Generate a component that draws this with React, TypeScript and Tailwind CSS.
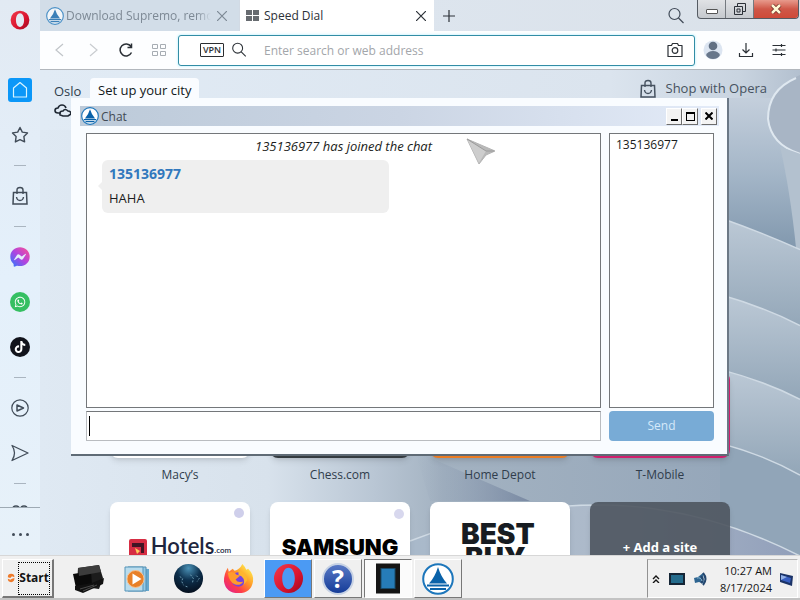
import React from "react";
import { FaFacebookMessenger, FaTiktok, FaWhatsapp } from "react-icons/fa";

type IconProps = { className?: string; children: React.ReactNode; box?: string };

function Line({ className = "size-5", children, box = "0 0 20 20" }: IconProps) {
  return (
    <svg aria-hidden="true" viewBox={box} className={className} fill="none" stroke="currentColor" strokeWidth="1.2">
      {children}
    </svg>
  );
}

function SupremoLogo({ className }: { className: string }) {
  return (
    <svg aria-hidden="true" viewBox="0 0 32 32" className={className}>
      <circle cx="16" cy="16" r="14.8" fill="#fff" stroke="#1c76bb" strokeWidth="2" />
      <path d="M16 4Q19 14 25 20.500H7Q13 14 16 4Z" fill="#0a62a9" />
      <path d="M5 22.500H27M8 26H24" stroke="#0a62a9" strokeWidth="2" />
    </svg>
  );
}

function OperaLogo({ className }: { className: string }) {
  return (
    <svg aria-hidden="true" viewBox="0 0 32 32" className={className}>
      <defs>
        <linearGradient id="operaRed" x1="0" y1="0" x2="1" y2="1">
          <stop offset="0" stopColor="#f23a4c" />
          <stop offset=".6" stopColor="#d8142e" />
          <stop offset="1" stopColor="#9c0720" />
        </linearGradient>
      </defs>
      <path
        fillRule="evenodd"
        fill="url(#operaRed)"
        d="M16 1a15 15 0 1 0 0 30a15 15 0 1 0 0-30ZM16 5c4 0 6.500 5 6.500 11S20 27 16 27S9.500 22 9.500 16S12 5 16 5Z"
      />
    </svg>
  );
}

function Magnifier({ className = "size-5" }: { className?: string }) {
  return (
    <Line className={className}>
      <circle cx="8.500" cy="8" r="5.500" />
      <path d="m12.500 12 5 5" />
    </Line>
  );
}

function ShoppingBag({ className = "size-5" }: { className?: string }) {
  return (
    <Line className={className}>
      <path d="M3.500 6.500h13l.5 11.500H3Z" strokeWidth="1.500" />
      <path d="M7 8V4q0-2.500 3-2.500T13 4v4M6.500 11q.5 3.500 3.500 3.500t3.500-3.500" strokeWidth="1.400" />
    </Line>
  );
}

function Wallpaper() {
  return (
    <svg
      aria-hidden="true"
      viewBox="40 70 760 486"
      preserveAspectRatio="none"
      className="absolute inset-0 size-full"
    >
      <defs>
        <linearGradient id="sky" x1="0" y1="0" x2="1" y2="0">
          <stop offset="0" stopColor="#dfe9f3" />
          <stop offset=".3" stopColor="#d8e2ec" />
          <stop offset=".44" stopColor="#b9c6d4" />
          <stop offset=".53" stopColor="#a3b2c1" />
          <stop offset="1" stopColor="#92a4b8" />
        </linearGradient>
        <linearGradient id="top" x1="0" y1="0" x2="1" y2="0">
          <stop offset="0" stopColor="#e1ebf5" />
          <stop offset=".75" stopColor="#dbe4ee" />
          <stop offset=".92" stopColor="#c9d4e0" />
          <stop offset="1" stopColor="#b3c0cf" />
        </linearGradient>
        <linearGradient id="fold" x1="0" y1="0" x2="0" y2="1">
          <stop offset="0" stopColor="#bcc9d6" />
          <stop offset="1" stopColor="#8fa3b5" />
        </linearGradient>
        <linearGradient id="side" x1="0" y1="0" x2="0" y2="1">
          <stop offset="0" stopColor="#c4cfdc" />
          <stop offset=".5" stopColor="#a3b5c7" />
          <stop offset="1" stopColor="#7f96ac" />
        </linearGradient>
        <linearGradient id="shade" x1="0" y1="0" x2="1" y2="0">
          <stop offset="0" stopColor="#8c9cb2" stopOpacity="0" />
          <stop offset="1" stopColor="#71819c" />
        </linearGradient>
        <linearGradient id="low" x1="0" y1="0" x2="1" y2="0">
          <stop offset="0" stopColor="#a9b9ca" />
          <stop offset=".5" stopColor="#adbaca" />
          <stop offset="1" stopColor="#919fba" />
        </linearGradient>
      </defs>
      <rect x="40" y="70" width="760" height="486" fill="url(#sky)" />
      <rect x="40" y="70" width="760" height="60" fill="url(#top)" />
      <rect x="720" y="98" width="80" height="156" fill="url(#side)" />
      <path d="M800 75Q768 88 768 119Q771 145 800 154Z" fill="#a8b5c5" />
      <path d="M796 78Q768 90 768 119Q771 145 800 154" fill="none" stroke="#dfe8f0" strokeWidth="2" />
      <path d="M780 147Q790 190 796 248L800 250V154Z" fill="#b3c1cf" />
      <path d="M720 218Q765 234 800 250V340H720Z" fill="url(#fold)" />
      <path d="M720 295Q765 308 800 326V410H720Z" fill="url(#fold)" />
      <path d="M720 370Q765 382 800 400V485H720Z" fill="url(#fold)" />
      <path d="M720 444Q765 456 800 476V556H720Z" fill="#91a5b8" />
      <path d="M415 452 530 502H430Z" fill="url(#shade)" opacity=".8" />
      <path d="M410 542Q500 506 600 506Q700 506 800 557H410Z" fill="url(#low)" />
      <path
        d="M410 542Q500 506 600 506Q700 506 800 557M720 444Q765 456 800 476M720 370Q765 382 800 400M720 295Q765 308 800 326M720 218Q765 234 800 250"
        fill="none"
        stroke="#cfdae4"
        strokeWidth="1.500"
      />
    </svg>
  );
}

function Divider() {
  return <span className="h-px w-3 bg-[#aab5c0]" />;
}

function Sidebar() {
  const item = "flex size-6 items-center justify-center";
  return (
    <nav
      aria-label="Sidebar"
      className="flex w-10 shrink-0 flex-col items-center overflow-hidden bg-linear-to-b from-[#e2eaf3] via-[#e4f0fb] to-[#e7f1f9] text-[#414c58]"
    >
      <button aria-label="Opera menu" className="mt-2 flex size-6 items-center justify-center">
        <OperaLogo className="size-5" />
      </button>
      <button aria-label="Home" className="mt-[46px] flex size-6 items-center justify-center rounded-[3px] bg-[#0b97f8] text-[#d7f4ff]">
        <Line>
          <path d="M3.500 8 10 2.500 16.500 8v9h-13Z" strokeLinejoin="round" />
        </Line>
      </button>
      <button aria-label="Bookmarks" className={`${item} mt-[21px]`}>
        <Line>
          <path
            d="m10 2.500 2.300 4.600 5.200.8-3.600 3.700.7 5.300-4.600-2.200-4.600 2.200.7-5.300L2.500 7.900l5.200-.8Z"
            strokeLinejoin="round"
            strokeWidth="1.400"
          />
        </Line>
      </button>
      <div className="mt-[18px] flex flex-col items-center gap-[18px]">
        <Divider />
        <button aria-label="Shopping" className={item}>
          <ShoppingBag />
        </button>
        <Divider />
      </div>
      <button aria-label="Messenger" className={`${item} mt-[18px]`}>
        <svg width="0" height="0" className="absolute">
          <linearGradient id="messenger" x1="1" y1="0" x2="0" y2="1">
            <stop offset="0" stopColor="#ff5290" />
            <stop offset=".5" stopColor="#b044e0" />
            <stop offset="1" stopColor="#267cff" />
          </linearGradient>
        </svg>
        <FaFacebookMessenger className="size-5" fill="url(#messenger)" />
      </button>
      <button aria-label="WhatsApp" className={`${item} mt-[21px]`}>
        <span className="flex size-5 items-center justify-center rounded-full bg-[#35bf62] text-white">
          <FaWhatsapp className="size-3" />
        </span>
      </button>
      <button aria-label="TikTok" className={`${item} mt-[21px]`}>
        <span className="flex size-5 items-center justify-center rounded-full bg-[#11131b] text-white">
          <FaTiktok className="size-3" />
        </span>
      </button>
      <div className="mt-[18px] flex flex-col items-center gap-[18px]">
        <Divider />
        <button aria-label="Player" className={item}>
          <Line>
            <circle cx="10" cy="10" r="8.200" />
            <path d="m7 7 6.500 3L7 13Z" strokeWidth="1.500" strokeLinejoin="round" />
          </Line>
        </button>
      </div>
      <button aria-label="My Flow" className={`${item} mt-[21px]`}>
        <Line>
          <path d="M2 2.500 18 10 2 17.500Q7 10 2 2.500Z" strokeLinejoin="round" strokeWidth="1.300" />
        </Line>
      </button>
      <div className="mt-[18px] flex h-[25px] w-full shrink-0 flex-col items-center justify-between border-b border-[#9eaab4]">
        <Divider />
        <Line className="h-0.5 w-4" box="0 0 16 2">
          <path d="M1 2q3-2 6 0M9 2q3-2 6 0" strokeWidth="1.500" />
        </Line>
      </div>
      <button aria-label="More" className="mt-[25px] flex gap-1">
        <span className="size-[3px] rounded-full bg-current" />
        <span className="size-[3px] rounded-full bg-current" />
        <span className="size-[3px] rounded-full bg-current" />
      </button>
    </nav>
  );
}

function Cross({ className = "size-[10px]" }: { className?: string }) {
  return (
    <Line className={className} box="0 0 10 10">
      <path d="m0 0 10 10M10 0 0 10" />
    </Line>
  );
}

function TabStrip() {
  const control = "flex h-full items-center justify-center";
  return (
    <div className="flex h-[31px] shrink-0 items-stretch bg-linear-to-r from-[#d3dee9] via-[#dde5ee] to-[#dae1e9] text-[12px] text-[#2c3138]">
      <div className="flex w-50 items-center border-r border-[#d2dae4] bg-[#d2dde8] pr-3 pl-1.5 text-[#7d8995]">
        <SupremoLogo className="size-[18px] shrink-0 opacity-75" />
        <span className="ml-0.5 w-[145px] overflow-hidden mask-r-from-90% whitespace-nowrap">Download Supremo, remo</span>
        <button aria-label="Close Supremo tab" className="ml-auto">
          <Cross />
        </button>
      </div>
      <div className="flex w-[194px] items-center bg-white px-[6px] pr-2">
        <svg aria-hidden="true" viewBox="0 0 13 11" className="h-[11px] w-[13px]" fill="#676b70">
          <path d="M0 0h6v5H0zM7 0h6v5H7zM0 6h6v5H0zM7 6h6v5H7z" />
        </svg>
        <span className="ml-[5px]">Speed Dial</span>
        <button aria-label="Close Speed Dial tab" className="ml-auto">
          <Cross />
        </button>
      </div>
      <button aria-label="New tab" className="flex w-[30px] items-center justify-center">
        <Line className="size-3" box="0 0 12 12">
          <path d="M6 0v12M0 6h12" />
        </Line>
      </button>
      <button aria-label="Search tabs" className="mr-[11px] ml-auto text-[#414b58]">
        <Magnifier />
      </button>
      <div className="mr-px flex h-[19px] w-[102px] overflow-hidden rounded-b-[4px] border border-t-0 border-[#555b63] bg-linear-to-b from-[#e0e2e5] to-[#c5c9ce]">
        <button aria-label="Minimize" className={`${control} w-7 border-r border-[#74797f]`}>
          <span className="mt-1 h-[5px] w-3 rounded-[1px] border border-[#555] bg-white" />
        </button>
        <button aria-label="Restore" className={`${control} w-7 border-r border-[#74797f]`}>
          <Line className="size-3" box="0 0 12 12">
            <path d="M3.500 3V.5h8v8H9M.5 3.500h8v8h-8ZM3 6h3v3H3Z" strokeWidth="1" />
          </Line>
        </button>
        <button aria-label="Close" className={`${control} flex-1 bg-linear-to-b from-[#e79a8c] via-[#cf5748] to-[#cf4a38]`}>
          <svg aria-hidden="true" viewBox="0 0 12 10" className="h-[10px] w-3">
            <path d="m2 1 8 8M10 1 2 9" stroke="#672820" strokeWidth="4" />
            <path d="m2 1 8 8M10 1 2 9" stroke="#fff7d4" strokeWidth="2.500" />
          </svg>
        </button>
      </div>
    </div>
  );
}

function Toolbar() {
  const nav = "flex w-[33px] items-center justify-center";
  return (
    <div className="flex h-[39px] shrink-0 items-center border-b border-[#b2b7bd] bg-[#fdfeff] pl-[3px] text-[#2b3036]">
      <button aria-label="Back" className={`${nav} text-[#c1c5c9]`}>
        <Line className="size-4" box="0 0 16 16">
          <path d="m11 2-7 6 7 6" />
        </Line>
      </button>
      <button aria-label="Forward" className={`${nav} text-[#c9ccd0]`}>
        <Line className="size-4" box="0 0 16 16">
          <path d="m5 2 7 6-7 6" />
        </Line>
      </button>
      <button aria-label="Reload" className={nav}>
        <Line className="size-4" box="0 0 16 16">
          <path d="M13.500 10.500A6 6 0 1 1 13 4.500M13.500 1.500v4H9.500" strokeWidth="1.500" />
        </Line>
      </button>
      <button aria-label="Speed Dial" className={`${nav} text-[#a7adb3]`}>
        <Line className="h-3 w-[14px]" box="0 0 14 12">
          <path d="M.5.5h5v4h-5zM8.500.5h5v4h-5zM.5 7.500h5v4h-5zM8.500 7.500h5v4h-5z" strokeWidth="1" />
        </Line>
      </button>
      <div className="ml-[3px] flex h-[31px] flex-1 items-center rounded-[3px] border border-[#328da5] bg-white pr-[9px] pl-[21px] shadow-[0_0_2px_1px_#d7f6ff]">
        <button className="h-[14px] w-6 rounded-[1px] border border-[#2b2d30] text-[9px] leading-[12px] font-semibold">VPN</button>
        <Magnifier className="ml-[6px] size-[18px]" />
        <input
          aria-label="Search or web address"
          placeholder="Enter search or web address"
          className="ml-4 min-w-0 flex-1 bg-transparent pt-0.5 text-[12px] outline-none placeholder:text-[#a3a6aa]"
        />
        <button aria-label="Snapshot">
          <Line>
            <path d="M3 5.500h3.500l1-2h5l1 2H17v11H3Z" strokeLinejoin="round" />
            <circle cx="10" cy="10.500" r="2.800" />
          </Line>
        </button>
      </div>
      <div className="mr-[11px] ml-2 flex items-center gap-[13px]">
        <button aria-label="Profile">
          <svg aria-hidden="true" viewBox="0 0 20 20" className="size-5">
            <circle cx="10" cy="10" r="9.500" fill="#dce5f1" />
            <circle cx="10" cy="6" r="4.300" fill="#617083" />
            <path d="M3 15q2-4 7-4t7 4q-2 4-7 4t-7-4Z" fill="#68778b" />
          </svg>
        </button>
        <button aria-label="Downloads">
          <Line>
            <path d="M10 3v10M6.500 9.500 10 13l3.500-3.500M3.500 13v3.500h13V13" />
          </Line>
        </button>
        <button aria-label="Easy setup">
          <Line>
            <path d="M3.500 5.500h13M3.500 10h13M3.500 14.500h13M12.500 4v3M7 8.500v3M12.500 13v3" />
          </Line>
        </button>
      </div>
    </div>
  );
}

function HotelsTile() {
  return (
    <>
      <svg aria-hidden="true" viewBox="0 0 18 18" className="mb-px size-[18px]">
        <rect width="18" height="18" rx="2" fill="#d62d43" />
        <path d="M3 4h12v10h-3V8H3Z" fill="#421525" />
        <path d="m6 9 5 3-3 3Z" fill="#ffc85c" />
      </svg>
      <span className="ml-1 font-['Lato'] text-[22px] leading-6 font-semibold text-[#20263e]">Hotels</span>
      <span className="font-['Lato'] text-[8px] leading-4 font-semibold text-[#20263e]">.com</span>
    </>
  );
}

type Dial = { name: string; edge: string };
const firstRow: Dial[] = [
  { name: "Macy’s", edge: "bg-white" },
  { name: "Chess.com", edge: "bg-[#343b40]" },
  { name: "Home Depot", edge: "bg-[#ea7c24]" },
  { name: "T-Mobile", edge: "bg-[#d0206e]" },
];

function SpeedDial() {
  const tile = "relative flex h-[86px] rounded-lg bg-white shadow-md";
  return (
    <main className="relative min-h-0 flex-1 overflow-hidden text-[12px] text-[#303d4c]">
      <Wallpaper />
      <div className="relative flex h-[302px] items-start pt-2 pr-[33px] pl-[14px] text-[13px]">
        <div className="flex w-9 flex-col">
          <span className="leading-[26px]">Oslo</span>
          <Line className="h-[14px] w-5 text-[#1f2833]" box="0 0 20 14">
            <path
              d="M7 9H4Q1 9 1 6.500T4 4Q5 1 8 1T12 4M6 11Q5 7 9 7 11 4 14 7 17 7 17 10L14 12H9Z"
              strokeWidth="1.600"
            />
          </Line>
        </div>
        <button className="h-[26px] rounded-[4px] bg-[#fafcff] px-2 text-[#111820]">Set up your city</button>
        <button className="ml-auto flex items-center gap-2 pt-px text-[#465260]">
          <ShoppingBag />
          Shop with Opera
        </button>
      </div>
      <div className="relative grid grid-cols-[repeat(4,140px)] justify-center gap-5">
        {firstRow.map((dial) => (
          <a key={dial.name} href="#dial" className="flex h-[110px] flex-col items-center">
            <span className={`h-[86px] w-full shrink-0 rounded-lg shadow-md ${dial.edge}`} />
            <span className="mt-[9px] leading-4">{dial.name}</span>
          </a>
        ))}
        <a href="#hotels" aria-label="Hotels.com" className={`${tile} items-end justify-center pb-[30px]`}>
          <HotelsTile />
          <span className="absolute top-1.5 right-1.5 size-[10px] rounded-full bg-[#cfcfeb]" />
        </a>
        <a href="#samsung" className={`${tile} items-center justify-center pt-1 font-['Inter'] text-[22px] font-black text-black`}>
          SAMSUNG
          <span className="absolute top-[7px] right-1.5 size-[10px] rounded-full bg-[#d8d8ee]" />
        </a>
        <a
          href="#bestbuy"
          className={`${tile} flex-col items-start pt-5 pl-[31px] font-['Inter'] text-[28px] leading-[24px] font-black text-[#171c22]`}
        >
          <span>BEST</span>
          <span className="pl-1">BUY</span>
        </a>
        <button className="h-[86px] rounded-lg bg-[#4e555f]/90 pt-1.5 text-[13px] font-bold text-white shadow-md">+ Add a site</button>
      </div>
    </main>
  );
}

function ChatWindow() {
  const caption =
    "flex h-[17px] w-4 items-center justify-center border border-t-white border-r-[#6d6d6d] border-b-[#6d6d6d] border-l-white bg-[#f3f3f3] text-black";
  return (
    <section
      aria-label="Chat window"
      className="absolute top-[98px] left-[71px] flex h-[358px] w-[658px] flex-col border-r-2 border-b-2 border-r-[#6b7886] border-b-[#5f6b76] bg-[#f9fcff] pt-2 pr-2 pb-[13px] pl-[9px] text-[12px] text-[#1b1d20]"
    >
      <header className="flex h-5 shrink-0 items-center bg-linear-to-r from-[#bccad9] via-[#cbd5e4] to-[#e3ebf8] pr-0.5">
        <SupremoLogo className="ml-px size-[18px]" />
        <h1 className="ml-0.5 pt-px text-[#414a54]">Chat</h1>
        <div className="ml-auto flex">
          <button aria-label="Minimize chat" className={`${caption} items-end pb-[3px]`}>
            <span className="h-0.5 w-[7px] bg-black" />
          </button>
          <button aria-label="Maximize chat" className={caption}>
            <span className="size-[9px] border border-t-2 border-black" />
          </button>
          <button aria-label="Close chat" className={`${caption} ml-[3px]`}>
            <svg aria-hidden="true" viewBox="0 0 8 8" className="size-2">
              <path d="m.5.5 7 7m0-7-7 7" stroke="#000" strokeWidth="2" />
            </svg>
          </button>
        </div>
      </header>
      <div className="mt-[7px] mr-[5px] ml-[6px] grid min-h-0 flex-1 grid-cols-[1fr_105px] grid-rows-[1fr_30px] gap-x-2 gap-y-[3px]">
        <div className="border border-[#74777a] bg-white">
          <p className="mt-1 text-center text-[13px] leading-4 italic">135136977 has joined the chat</p>
          <div className="relative mt-[6px] ml-[15px] h-[53px] w-[287px] rounded-[6px] bg-[#efefef] px-[7px] pt-1">
            <span className="absolute top-[22px] -left-1 border-y-4 border-r-4 border-y-transparent border-r-[#efefef]" />
            <p className="text-[14px] leading-5 font-bold text-[#3178bd]">135136977</p>
            <p className="mt-[6px] text-[13px] leading-4">HAHA</p>
          </div>
        </div>
        <div className="border border-[#74777a] bg-white px-1.5 py-[3px] leading-4">135136977</div>
        <div className="flex items-center border border-[#b9bcc0] border-t-[#74777a] bg-white pl-0.5">
          <span className="h-5 w-px bg-black" />
          <input aria-label="Message" className="h-full min-w-0 flex-1 bg-transparent px-1 outline-none" />
        </div>
        <button className="rounded-[4px] bg-[#78abd6] text-[#d5e9fa]">Send</button>
      </div>
    </section>
  );
}

function Pointer() {
  return (
    <svg aria-hidden="true" viewBox="0 0 30 27" className="absolute top-[138px] left-[466px] h-[27px] w-[30px]">
      <path d="m1 1 28 12-9 4-7 9Z" fill="#b9b9b9" stroke="#b4b4b4" />
      <path d="m1 1 19 12-7 12Z" fill="#cdcdcd" />
      <path d="m1 1 19 12 8 0" fill="none" stroke="#9b9b9b" />
    </svg>
  );
}

function ComputerIcon() {
  return (
    <svg aria-hidden="true" viewBox="0 0 34 30" className="h-[30px] w-[34px]">
      <path d="M7 4 28 1l4 13-4 11-22-3Z" fill="#1c1c1c" />
      <path d="m2 10 18-3 1 14L5 24Z" fill="#0a0a0a" />
      <path d="m7 4 21-3 2 7-22 4Z" fill="#3c3c3c" />
      <path d="m4 22 17-3 12-5-1 6-20 9-8-3Z" fill="#111" />
      <path d="m9 25 14-4M12 27l14-6" stroke="#4a4a4a" />
    </svg>
  );
}

function MediaIcon() {
  return (
    <svg aria-hidden="true" viewBox="0 0 30 28" className="h-7 w-[30px]">
      <path d="m8 3 18 1v22H8Z" fill="#67a9cf" />
      <path d="M5 2h18v24H5Z" fill="#96cae6" stroke="#528eb1" />
      <path d="M2 2h18v24H2Z" fill="#b9dced" stroke="#5594b9" />
      <circle cx="12.500" cy="14" r="8.500" fill="#e88028" stroke="#f7c08f" />
      <path d="m9.500 8.500 9 5.500-9 5.500Z" fill="#fff" />
    </svg>
  );
}

function GlobeIcon() {
  return (
    <svg aria-hidden="true" viewBox="0 0 32 32" className="size-[31px]">
      <defs>
        <radialGradient id="night" cx=".5" cy=".15" r=".9">
          <stop offset="0" stopColor="#4a91b6" />
          <stop offset=".45" stopColor="#0d304d" />
          <stop offset="1" stopColor="#050c19" />
        </radialGradient>
      </defs>
      <circle cx="16" cy="16" r="15" fill="url(#night)" />
      <path d="m7 14 3 2-1 3 2 4M18 12l3 4-1 5M24 13l3 3-2 3M13 24l3 1" fill="none" stroke="#6f9db3" strokeDasharray="2 1.500" />
    </svg>
  );
}

function FirefoxIcon() {
  return (
    <svg aria-hidden="true" viewBox="0 0 32 32" className="size-[31px]">
      <defs>
        <linearGradient id="fox" x1=".9" y1=".1" x2=".15" y2=".9">
          <stop offset="0" stopColor="#fff04f" />
          <stop offset=".4" stopColor="#ff9b28" />
          <stop offset=".75" stopColor="#ff3d48" />
          <stop offset="1" stopColor="#e62783" />
        </linearGradient>
      </defs>
      <path
        d="M20 1q3 3 4 6l2-1q6 6 5 13-2 12-15 12Q3 31 1 19 1 11 5 5l1 4 4-3 2 2q5-1 8-7Z"
        fill="url(#fox)"
      />
      <circle cx="16" cy="17" r="7.500" fill="#7543df" />
      <path d="M5 10q7-2 9 2l4 1-5 4q2 4 8 2-3 5-9 3-6-3-7-12Z" fill="#ff9b2b" />
      <path d="M16 8q9 1 9 10l-4 5q3-8-5-11Z" fill="#ffb52f" />
    </svg>
  );
}

function HelpIcon() {
  return (
    <span className="flex size-8 items-center justify-center rounded-full border-2 border-[#c7d2e4] bg-linear-to-b from-[#5878c5] to-[#153c98] text-[25px] leading-none font-bold text-white">
      ?
    </span>
  );
}

function TabletIcon() {
  return (
    <svg aria-hidden="true" viewBox="0 0 24 30" className="h-[31px] w-6">
      <rect width="24" height="30" fill="#151515" />
      <rect x="5" y="5" width="14" height="20" fill="#267cb8" stroke="#174a6a" />
    </svg>
  );
}

function Taskbar() {
  const raised = "border border-t-white border-r-[#777] border-b-[#777] border-l-white";
  const task = "flex h-[39px] w-12 items-center justify-center";
  return (
    <footer className="flex h-[45px] shrink-0 border-t border-b-2 border-t-[#d7d7d7] border-b-[#c3c3c3] bg-[#f0f0f0] px-0.5 pt-[3px] text-[11px] text-[#141414]">
      <button className={`flex h-[39px] w-[52px] shrink-0 items-center ${raised} border-r-2 border-b-2 pr-0.5 pl-1 text-[12px] font-bold`}>
        <svg aria-hidden="true" viewBox="0 0 10 12" className="h-3 w-[10px]">
          <path d="M1 5q0-4 4-4t4 4L6 4 4 6ZM1 7l3 1 2-1 3-1q0 5-4 5T1 7Z" fill="#ee7b2c" />
        </svg>
        <span className="ml-[3px] flex h-[33px] flex-1 items-center justify-center border border-dotted border-black">Start</span>
      </button>
      <div className="ml-[10px] flex gap-0.5">
        <button aria-label="Computer" className={task}><ComputerIcon /></button>
        <button aria-label="Media player" className={task}><MediaIcon /></button>
        <button aria-label="Globe" className={task}><GlobeIcon /></button>
        <button aria-label="Firefox" className={task}><FirefoxIcon /></button>
        <button aria-label="Opera" className={`${task} ${raised} bg-[#4b9af4]`}><OperaLogo className="size-[31px]" /></button>
        <button aria-label="Help" className={`${task} ${raised}`}><HelpIcon /></button>
        <button aria-label="Tablet" className={`${task} border border-t-[#777] border-r-white border-b-white border-l-[#777] bg-[#fbfbfb]`}><TabletIcon /></button>
        <button aria-label="Supremo" className={`${task} ${raised}`}><SupremoLogo className="size-8" /></button>
      </div>
      <div className="ml-auto flex h-[39px] w-[151px] items-center border border-t-[#b5b5b5] border-r-white border-b-white border-l-[#929292] pl-1">
        <button aria-label="Show hidden icons">
          <Line className="size-2" box="0 0 8 8">
            <path d="m1 4 3-3 3 3M1 8l3-3 3 3" strokeWidth="1.400" />
          </Line>
        </button>
        <svg aria-hidden="true" viewBox="0 0 16 12" className="ml-[9px] h-3 w-4">
          <rect width="16" height="12" fill="#152536" />
          <rect x="2" y="2" width="12" height="8" fill="#246b8c" />
        </svg>
        <svg aria-hidden="true" viewBox="0 0 16 16" className="ml-2 size-4">
          <path d="m1 7 4-1 5-4 1 11-5-2-4 1Z" fill="#2e6591" />
          <path d="M10 2q5 6 0 12M8 5q3 4 0 7" fill="none" stroke="#24466e" strokeWidth="2" />
          <path d="M4 7q4-1 5 3" fill="none" stroke="#8ebad4" />
        </svg>
        <time className="ml-auto text-right leading-[17px]">
          10:27 AM
          <br />
          8/17/2024
        </time>
        <svg aria-hidden="true" viewBox="0 0 16 16" className="mr-0.5 ml-[7px] size-4">
          <path d="m1 2 13 3-1 10-12-4Z" fill="#1b3367" />
          <path d="m2 4 10 3-1 5-9-3Z" fill="#385fc1" />
          <path d="m2 4 6 2-6 3Z" fill="#92b0e6" />
        </svg>
      </div>
    </footer>
  );
}

export default function App() {
  return (
    <div className="relative flex h-screen w-full flex-col overflow-hidden font-['Open_Sans','Noto_Sans',sans-serif]">
      <div className="flex min-h-0 flex-1">
        <Sidebar />
        <div className="flex min-w-0 flex-1 flex-col">
          <TabStrip />
          <Toolbar />
          <SpeedDial />
        </div>
      </div>
      <Taskbar />
      <ChatWindow />
      <Pointer />
    </div>
  );
}
